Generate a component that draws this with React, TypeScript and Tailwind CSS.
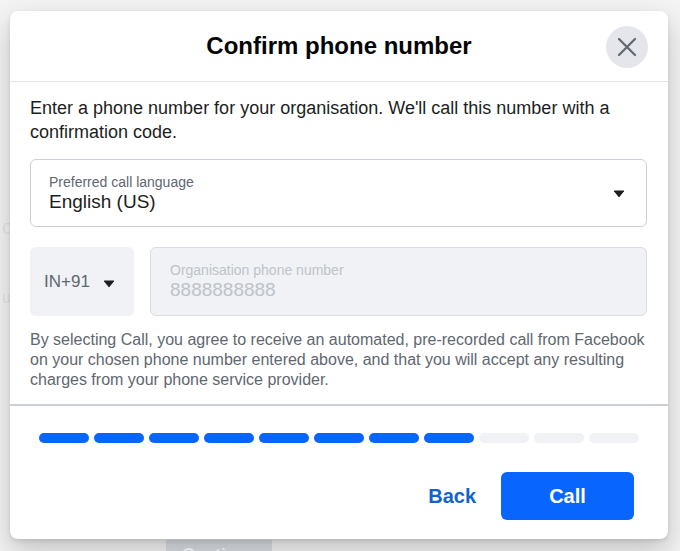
import React from "react";

function Caret({ className = "" }: { className?: string }) {
  return (
    <svg width="12" height="8" viewBox="0 0 12 8" className={className}>
      <path d="M1 1.2 Q0.6 0.5 1.5 0.5 H10.5 Q11.4 0.5 11 1.2 L6.6 6.8 Q6 7.5 5.4 6.8 Z" fill="#1c1e21" />
    </svg>
  );
}

export default function App() {
  const segs = Array.from({ length: 11 }, (_, i) => i < 8);
  return (
    <div
      className="relative w-[680px] h-[551px] overflow-hidden bg-[#f3f3f3]"
      style={{ fontFamily: '"Liberation Sans", Arial, Helvetica, sans-serif' }}
    >
      {/* faint page behind the overlay */}
      <div className="flex flex-col pl-[2px] pt-[212px] text-[#e4e4e4] text-[20px] gap-[44px] select-none">
        <div>or</div>
        <div className="text-[16px]">ur</div>
      </div>
      <div className="absolute left-[166px] top-[540px] w-[106px] h-[30px] bg-[#d9dde2] text-white font-bold text-[17px] flex items-center justify-center">
        Continue
      </div>

      {/* modal */}
      <div className="absolute left-[10px] top-[11px] w-[658px] h-[528px] bg-white rounded-[8px] shadow-[0_12px_28px_0_rgba(0,0,0,0.2),0_2px_4px_0_rgba(0,0,0,0.1)] flex flex-col">
        <div className="relative h-[71px] flex items-center justify-center border-b border-[#e4e6eb]">
          <div className="text-[24px] font-bold text-[#050505] leading-[28px]">Confirm phone number</div>
          <button className="absolute right-[20px] top-[15px] w-[42px] h-[42px] rounded-full bg-[#e4e6eb] flex items-center justify-center">
            <svg width="22" height="22" viewBox="0 0 22 22">
              <path d="M3 3 L19 19 M19 3 L3 19" stroke="#606770" strokeWidth="2.2" strokeLinecap="round" />
            </svg>
          </button>
        </div>

        <div className="pl-[20px] pr-[21px] pt-[14px]">
          <p className="text-[18px] leading-[24px] text-[#1c1e21]">
            Enter a phone number for your organisation. We'll call this number with a confirmation code.
          </p>

          <div className="mt-[15px] h-[68px] rounded-[6px] border border-[#ccd0d5] flex items-center pl-[18px] pr-[21px]">
            <div className="flex-1 flex flex-col">
              <span className="text-[14px] leading-[17px] text-[#606770]">Preferred call language</span>
              <span className="text-[19px] leading-[22px] text-[#1c1e21]">English (US)</span>
            </div>
            <Caret className="mt-[1px]" />
          </div>

          <div className="mt-[20px] flex gap-[16px] h-[69px]">
            <div className="w-[104px] rounded-[6px] bg-[#f0f2f5] flex items-center pl-[14px]">
              <span className="text-[17px] text-[#606770]">IN+91</span>
              <Caret className="ml-[13px] mt-[4px]" />
            </div>
            <div className="flex-1 rounded-[6px] bg-[#f0f2f5] border border-[#dadde1] flex flex-col justify-center pl-[19px]">
              <span className="text-[14px] leading-[17px] text-[#bec3c9]">Organisation phone number</span>
              <span className="text-[19px] leading-[22px] text-[#bec3c9]">8888888888</span>
            </div>
          </div>

          <p className="mt-[14px] text-[16px] leading-[20px] text-[#606770]">
            By selecting Call, you agree to receive an automated, pre-recorded call from Facebook on your chosen phone number entered above, and that you will accept any resulting charges from your phone service provider.
          </p>
        </div>

        <div className="mt-[14px] border-t-2 border-[#ccd0d5]" />

        <div className="px-[29px] pt-[27px] flex gap-[5px]">
          {segs.map((on, i) => (
            <div key={i} className={`flex-1 h-[10px] rounded-full ${on ? "bg-[#0866ff]" : "bg-[#f0f2f5]"}`} />
          ))}
        </div>

        <div className="mt-[29px] flex justify-end items-center pr-[34px] gap-[25px]">
          <button className="text-[20px] font-bold text-[#1463cc]">Back</button>
          <button className="w-[133px] h-[48px] rounded-[6px] bg-[#0866ff] text-white text-[20px] font-bold">Call</button>
        </div>
      </div>
    </div>
  );
}
